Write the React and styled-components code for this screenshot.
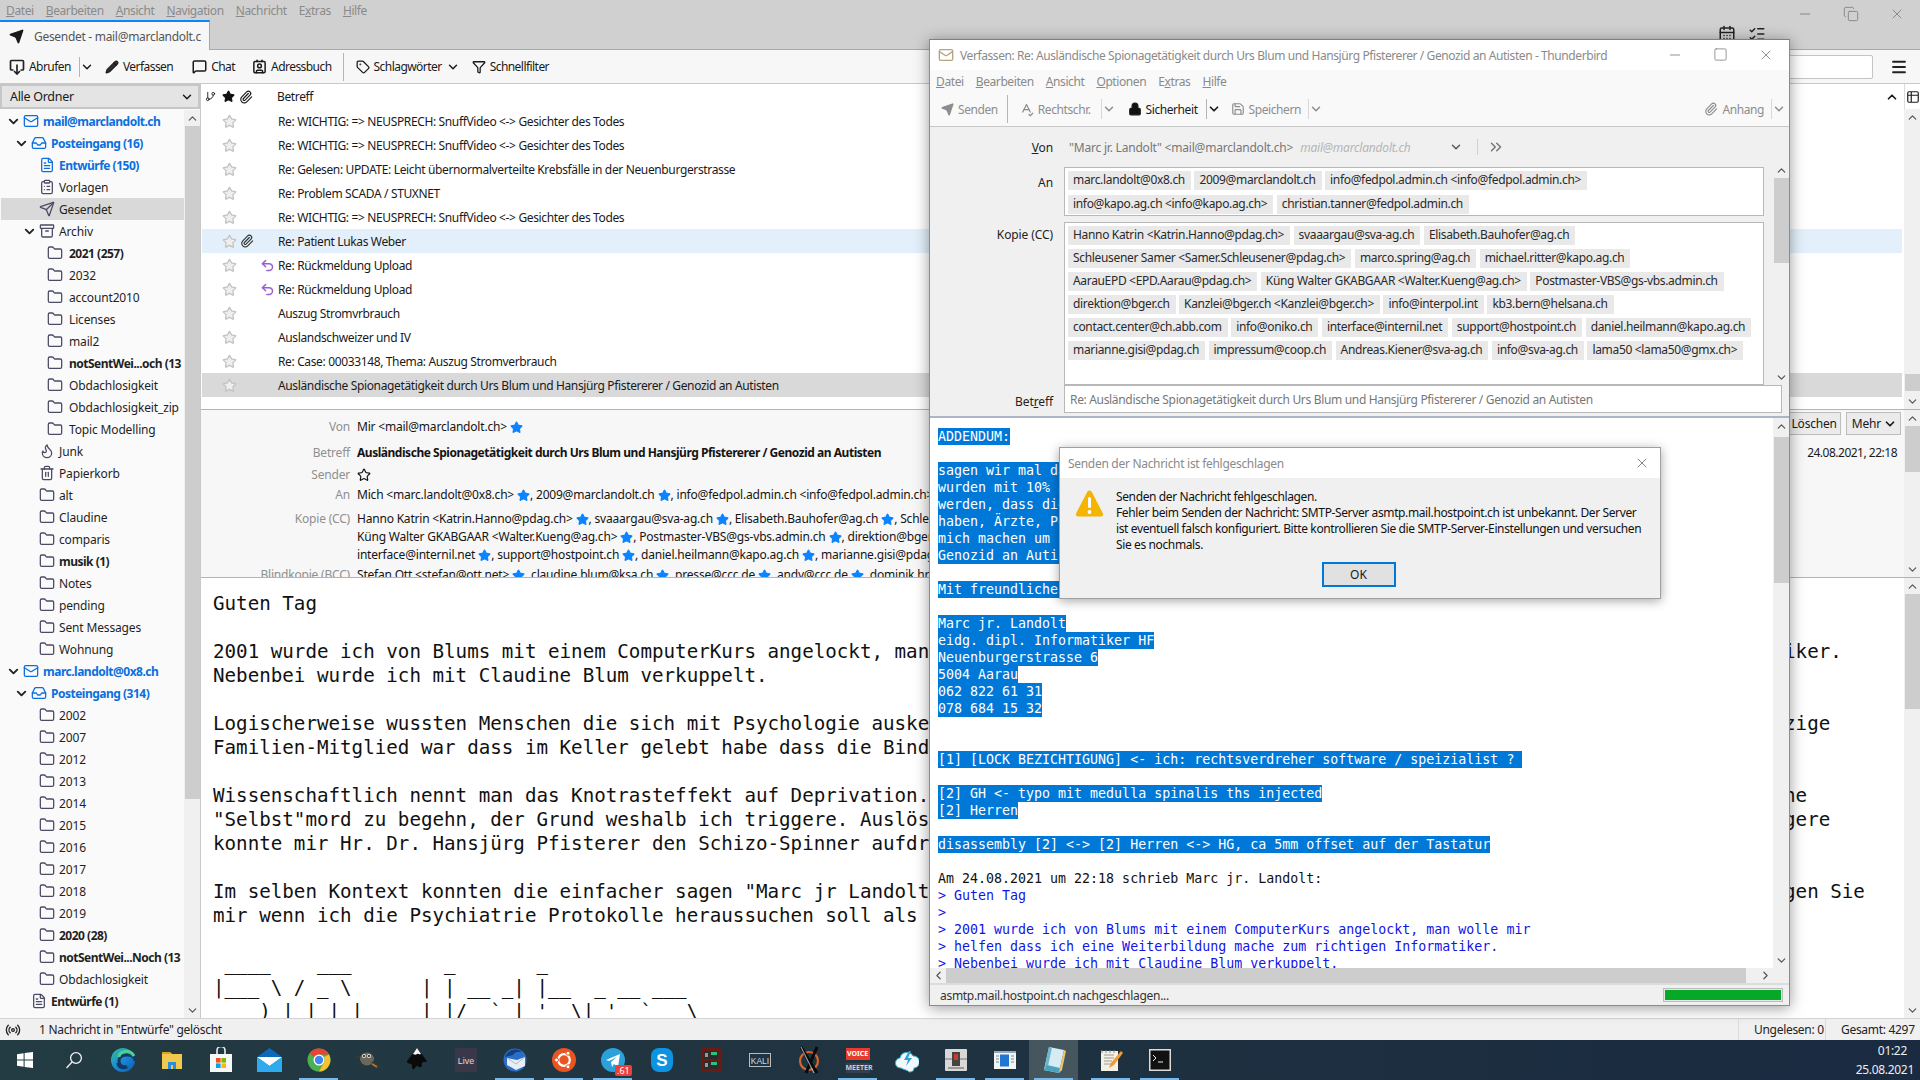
import React from 'react'
import styled, { createGlobalStyle } from 'styled-components'
import {
  Star, Paperclip, ChevronDown, ChevronUp, ChevronRight, ChevronLeft, Pencil, MessageSquare, Tag, Filter, Send,
  Flame, Trash2, Folder, Lock, Save, X, Minus, Square, Copy, Menu, ChevronsRight, Inbox, FileText,
  ClipboardList, Archive, Mail, Contact, CalendarDays, ListChecks, Radio, Undo2, SpellCheck, GitBranch, Table2,
} from 'lucide-react'

const UI = '"Noto Sans", "Open Sans", sans-serif'
const MONO = '"DejaVu Sans Mono", "Liberation Mono", monospace'

const GlobalStyle = createGlobalStyle`
  html, body { margin: 0; padding: 0; background: #fff; }
  body { font-family: ${UI}; font-size: 12px; color: #1a1a1a; }
  * { box-sizing: border-box; }
`

const Desktop = styled.div`
  position: relative;
  width: 1920px;
  height: 1080px;
  overflow: hidden;
  display: flex;
  flex-direction: column;
  background: #fff;
`

const MenuRow = styled.div`
  display: flex;
  align-items: center;
  gap: 12px;
  flex: none;
  height: ${p => p.$h}px;
  padding-left: ${p => p.$pad}px;
  background: ${p => p.$bg};
  color: #8a8a8a;
  font-size: 12px;
  letter-spacing: -0.4px;
  u { text-underline-offset: 1px; }
`

const TitleArea = styled.div`
  display: flex;
  flex: none;
  height: 30px;
  background: #d0d0d0;
  border-bottom: 1px solid #a8a8a8;
`

const Tab = styled.div`
  width: 210px;
  height: 30px;
  display: flex;
  align-items: center;
  gap: 10px;
  padding-left: 9px;
  background: #f7f7f7;
  border-top: 2px solid #0a84ff;
  border-right: 1px solid #a8a8a8;
  color: #555;
  letter-spacing: -0.3px;
  white-space: nowrap;
  overflow: hidden;
`

const WinControls = styled.div`
  position: absolute;
  top: ${p => p.$top}px;
  right: ${p => p.$right}px;
  display: flex;
  gap: 30px;
  color: #777;
`

const TitleTools = styled.div`
  position: absolute;
  top: 25px;
  left: 1718px;
  display: flex;
  gap: 12px;
  color: #222;
`

const ToolItem = styled.div`
  display: flex;
  align-items: center;
  gap: 4px;
  margin-left: ${p => p.$ml || 0}px;
  font-size: 12px;
  letter-spacing: -0.42px;
  color: ${p => (p.$dim ? '#8d8d8d' : '#1a1a1a')};
  white-space: nowrap;
`

const MainToolbar = styled.div`
  display: flex;
  align-items: center;
  flex: none;
  height: 34px;
  padding-left: 9px;
  background: #f7f7f7;
  border-bottom: 1px solid #c8c8c8;
  position: relative;
  ${ToolItem} { letter-spacing: -0.55px; }
`

const ToolSep = styled.div`
  width: 1px;
  height: ${p => p.$h || 20}px;
  margin-left: ${p => p.$ml || 0}px;
  background: ${p => p.$c || '#b5b5b5'};
`

const SearchBox = styled.div`
  position: absolute;
  right: 47px;
  top: 5px;
  width: 160px;
  height: 24px;
  background: #fff;
  border: 1px solid #c4c4c4;
  border-radius: 2px;
`

const HamburgerSlot = styled.div`
  position: absolute;
  right: 12px;
  top: 8px;
  color: #222;
`

const Panes = styled.div`
  display: flex;
  flex: 1;
  min-height: 0;
`

const FolderPane = styled.div`
  flex: none;
  width: 201px;
  display: flex;
  flex-direction: column;
  background: #fafafa;
  border-right: 1px solid #c8c8c8;
`

const FolderSelect = styled.div`
  flex: none;
  height: 25px;
  margin-bottom: 1px;
  width: 200px;
  display: flex;
  align-items: center;
  justify-content: space-between;
  padding: 0 4px 0 8px;
  background: #e4e4e4;
  border: 2px solid #c6c6c6;
  font-size: 12.5px;
  letter-spacing: -0.3px;
`

const FolderBody = styled.div`
  flex: 1;
  min-height: 0;
  display: flex;
`

const FolderList = styled.div`
  flex: none;
  width: 184px;
  overflow: hidden;
`

const FolderRow = styled.div`
  display: flex;
  align-items: center;
  height: 22px;
  padding-left: ${p => 4 + p.$level * 8}px;
  margin-left: 1px;
  background: ${p => (p.$sel ? '#d9d9d9' : 'transparent')};
  color: ${p => (p.$blue ? '#0a6fe0' : '#1f1f1f')};
  font-weight: ${p => (p.$bold ? 700 : 400)};
  font-size: 12px;
  letter-spacing: ${p => (p.$bold ? -0.5 : -0.15)}px;
  white-space: nowrap;
  overflow: hidden;
`

const Twisty = styled.span`
  flex: none;
  width: 17px;
  display: flex;
  align-items: center;
  justify-content: center;
  color: #222;
`

const FolderIcon = styled.span`
  flex: none;
  width: 17px;
  margin-left: ${p => (p.$noTwisty ? 17 : 0)}px;
  margin-right: ${p => p.$mr ?? 5}px;
  display: flex;
  align-items: center;
  justify-content: center;
  color: ${p => (p.$blue ? '#0a6fe0' : '#4b4b66')};
`

const Scroll = styled.div`
  flex: ${p => (p.$fill ? 1 : 'none')};
  min-height: 0;
  display: flex;
  flex-direction: ${p => (p.$horizontal ? 'row' : 'column')};
  align-items: center;
  width: ${p => (p.$horizontal ? 'auto' : '16px')};
  height: ${p => (p.$horizontal ? '15px' : 'auto')};
  padding-right: ${p => (p.$horizontal ? '16px' : 0)};
  background: #f0f0f0;
  color: #555;
`

const Thumb = styled.div`
  flex: none;
  background: #cdcdcd;
  width: ${p => (p.$horizontal ? `${p.$size}px` : '15px')};
  height: ${p => (p.$horizontal ? '15px' : `${p.$size}px`)};
  margin-top: ${p => (p.$horizontal ? 0 : p.$offset)}px;
  margin-left: ${p => (p.$horizontal ? p.$offset : 0)}px;
`

const ArrowSlot = styled.div`
  flex: none;
  display: flex;
  align-items: center;
  justify-content: center;
  width: ${p => (p.$horizontal ? 16 : 15)}px;
  height: ${p => (p.$horizontal ? 15 : 16)}px;
  margin-top: ${p => (p.$end && !p.$horizontal ? 'auto' : 0)};
  margin-left: ${p => (p.$end && p.$horizontal ? 'auto' : 0)};
`

const Right = styled.div`
  flex: 1;
  min-width: 0;
  display: flex;
  flex-direction: column;
`

const ThreadPane = styled.div`
  flex: none;
  height: 325px;
  display: flex;
`

const ThreadList = styled.div`
  flex: 1;
  min-width: 0;
`

const ThreadScrollCol = styled.div`
  flex: none;
  width: 16px;
  display: flex;
  flex-direction: column;
`

const ColumnPicker = styled.div`
  flex: none;
  height: 25px;
  display: flex;
  align-items: center;
  justify-content: center;
  border-left: 1px solid #dcdcdc;
`

const ThreadHeader = styled.div`
  display: grid;
  grid-template-columns: 18px 18px 18px 22px 1fr 24px;
  align-items: center;
  height: 25px;
  font-size: 12px;
`

const IconCell = styled.span`
  display: flex;
  justify-content: center;
  color: ${p => p.$c || '#1a1a1a'};
`

const Subject = styled.span`
  white-space: nowrap;
  letter-spacing: -0.36px;
  color: #1a1a1a;
`

const ThreadRow = styled.div`
  display: grid;
  grid-template-columns: 18px 18px 18px 22px 1fr;
  align-items: center;
  height: 24px;
  margin: 0 2px 0 1px;
  background: ${p => p.$bg || 'transparent'};
  font-size: 12px;
`

const MsgHeader = styled.div`
  flex: none;
  height: 169px;
  display: flex;
  background: #f7f7f7;
  border-top: 1px solid #aab6c6;
  border-bottom: 1px solid #aab6c6;
  overflow: hidden;
`

const HeaderFields = styled.div`
  flex: 1;
  min-width: 0;
  padding-top: 8px;
  overflow: hidden;
`

const FieldRow = styled.div`
  display: grid;
  grid-template-columns: 149px 1fr;
  column-gap: 7px;
  height: 18px;
  line-height: 18px;
  margin-top: ${p => p.$mt || 0}px;
  font-size: 12px;
  white-space: nowrap;
  letter-spacing: -0.2px;
`

const FieldLabel = styled.span`
  text-align: right;
  color: #8f8f8f;
`

const FieldValue = styled.span`
  display: flex;
  align-items: center;
  font-weight: ${p => (p.$bold ? 700 : 400)};
  letter-spacing: ${p => (p.$bold ? -0.47 : -0.2)}px;
  color: #141414;
  white-space: pre;
`

const HeaderAside = styled.div`
  flex: none;
  width: 150px;
  padding: 2px 3px 0 0;
`

const HeaderActions = styled.div`
  display: flex;
  justify-content: flex-end;
  gap: 5px;
`

const HeaderBtn = styled.div`
  height: 23px;
  display: flex;
  align-items: center;
  gap: 2px;
  padding: 0 3px 0 5px;
  background: #ebebeb;
  border: 1px solid #bdbdbd;
  font-size: 12px;
  letter-spacing: -0.2px;
  color: #1a1a1a;
`

const MsgDate = styled.div`
  margin-top: 9px;
  padding-right: 4px;
  text-align: right;
  font-size: 12px;
  letter-spacing: -0.5px;
`

const MsgBodyRow = styled.div`
  flex: 1;
  min-height: 0;
  display: flex;
`

const MsgBody = styled.pre`
  flex: 1;
  min-width: 0;
  margin: 0;
  padding: 14px 0 0 12px;
  overflow: hidden;
  font-family: ${MONO};
  font-size: 19.2px;
  line-height: 24px;
  color: #111;
`

const StatusBar = styled.div`
  flex: none;
  height: 22px;
  display: flex;
  align-items: center;
  padding-left: 5px;
  background: #f0f0f0;
  border-top: 1px solid #d4d4d4;
  font-size: 12px;
  letter-spacing: -0.3px;
  color: #222;
`

const StatusCell = styled.div`
  height: 100%;
  display: flex;
  align-items: center;
  margin-left: ${p => (p.$auto ? 'auto' : 0)};
  width: ${p => p.$w}px;
  padding-left: ${p => p.$pad || 0}px;
  border-left: ${p => (p.$line ? '1px solid #dcdcdc' : 'none')};
  white-space: nowrap;
`

const Taskbar = styled.div`
  flex: none;
  height: 40px;
  display: flex;
  background: linear-gradient(90deg, #233b43, #1f3340 45%, #1a2a41);
  color: #eee;
`

const TaskCell = styled.div`
  position: relative;
  flex: none;
  width: 49px;
  height: 40px;
  display: flex;
  align-items: center;
  justify-content: center;
  margin-left: ${p => p.$ml || 0}px;
  background: ${p => (p.$active ? '#46565f' : 'transparent')};
  &::after {
    content: '';
    display: ${p => (p.$on ? 'block' : 'none')};
    position: absolute;
    left: 5px;
    right: 5px;
    bottom: 0;
    height: 2px;
    background: #76b9ed;
  }
`

const Badge = styled.span`
  position: absolute;
  left: 27px;
  top: 25px;
  padding: 0 2px;
  background: #e8413c;
  color: #fff;
  font-size: 9px;
  line-height: 11px;
  border-radius: 2px;
`

const Clock = styled.div`
  margin-left: auto;
  width: 70px;
  padding-right: 6px;
  display: flex;
  flex-direction: column;
  align-items: flex-end;
  justify-content: center;
  gap: 4px;
  font-size: 12px;
  letter-spacing: -0.3px;
  line-height: 15px;
`

const ClockTime = styled.span`
  padding-right: 7px;
`

const VoiceLogo = styled.div`
  display: flex;
  flex-direction: column;
  align-items: center;
  width: 24px;
  font-size: 7px;
  font-weight: 700;
  line-height: 10px;
`

const VoiceTop = styled.span`
  width: 100%;
  text-align: center;
  background: #e83b30;
  color: #fff;
  line-height: 12px;
`

const VoiceBottom = styled.span`
  margin-top: 3px;
  width: 100%;
  text-align: center;
  background: #35404c;
  color: #ccd;
`

/* compose window */

const ComposeWindow = styled.div`
  position: absolute;
  left: 929px;
  top: 39px;
  width: 861px;
  height: 967px;
  display: flex;
  flex-direction: column;
  background: #f0f0f0;
  border: 1px solid #8c8c8c;
  border-top-color: #7f7f7f;
  box-shadow: 0 2px 14px rgba(0, 0, 0, 0.4);
`

const ComposeTitle = styled.div`
  flex: none;
  height: 30px;
  display: flex;
  align-items: center;
  gap: 6px;
  padding-left: 8px;
  background: #fff;
  color: #8a8a8a;
  font-size: 12px;
  letter-spacing: -0.41px;
  white-space: nowrap;
`

const ComposeToolbar = styled.div`
  position: relative;
  flex: none;
  height: 35px;
  display: flex;
  align-items: center;
  padding-left: 11px;
  background: #f9f9f9;
  border-bottom: 1px solid #c8c8c8;
`

const ToolRight = styled.div`
  margin-left: auto;
  padding-right: 3px;
  display: flex;
  align-items: center;
`

const ComposeHead = styled.div`
  flex: none;
  height: 291px;
  display: flex;
  background: #f0f0f0;
  border-bottom: 2px solid #aab6c6;
`

const HeadFields = styled.div`
  flex: 1;
  min-width: 0;
`

const HeadScroll = styled.div`
  flex: none;
  display: flex;
  margin: 35px 0 31px;
`

const HeadGrid = styled.div`
  display: grid;
  grid-template-columns: 123px 1fr;
  column-gap: 11px;
`

const HeadLabel = styled.div`
  text-align: right;
  padding-top: ${p => p.$top || 0}px;
  font-size: 12px;
  letter-spacing: -0.1px;
  color: #222;
`

const VonLine = styled.div`
  height: 40px;
  display: flex;
  align-items: center;
  padding-left: 5px;
  color: #777;
  white-space: nowrap;
  letter-spacing: -0.2px;
`

const VonAlias = styled.i`
  margin-left: 7px;
  color: #b5b5b5;
`

const VonChevron = styled.span`
  display: flex;
  margin-left: 39px;
  color: #555;
`

const VonSep = styled.span`
  width: 1px;
  height: 16px;
  margin: 0 9px 0 14px;
  background: #d0d0d0;
`

const PillBox = styled.div`
  margin-right: 9px;
  height: ${p => p.$h}px;
  margin-bottom: ${p => p.$mb || 0}px;
  padding: 3px 0 0 3px;
  display: flex;
  flex-wrap: wrap;
  align-content: flex-start;
  column-gap: 3.5px;
  row-gap: ${p => p.$gap}px;
  background: #fff;
  border: 1px solid #b8b8b8;
`

const Pill = styled.span`
  height: 19px;
  line-height: 18px;
  padding: 0 6px 0 5px;
  background: #e9e9e9;
  color: #2a2a2a;
  font-size: 12px;
  letter-spacing: -0.33px;
  white-space: nowrap;
`

const SubjectInput = styled.div`
  height: 28px;
  margin-right: -9px;
  position: relative;
  padding-left: 5px;
  display: flex;
  align-items: center;
  background: #fff;
  border: 1px solid #b8b8b8;
  color: #777;
  font-size: 12px;
  letter-spacing: -0.33px;
  white-space: nowrap;
`

const ComposeBodyRow = styled.div`
  flex: 1;
  min-height: 0;
  display: flex;
  background: #fff;
`

const ComposeText = styled.pre`
  flex: 1;
  min-width: 0;
  margin: 0;
  padding: 10px 0 0 8px;
  overflow: hidden;
  font-family: ${MONO};
  font-size: 13.3px;
  line-height: 17px;
  color: #111;
`

const TextLine = styled.div`
  height: 17px;
  color: ${p => (p.$quote ? '#1414e6' : 'inherit')};
`

const Sel = styled.span`
  display: inline-block;
  height: 17px;
  background: #0078d7;
  color: #fff;
`

const ComposeStatus = styled.div`
  flex: none;
  height: 22px;
  display: flex;
  align-items: center;
  justify-content: space-between;
  padding: 0 6px 0 10px;
  background: #f0f0f0;
  border-top: 2px solid #dcdcdc;
  font-size: 12px;
  letter-spacing: -0.3px;
  color: #333;
`

const ProgressTrack = styled.div`
  width: 120px;
  height: 14px;
  padding: 1px;
  background: #e6e6e6;
  border: 1px solid #bcbcbc;
`

const ProgressFill = styled.div`
  height: 100%;
  background: #06a927;
`

/* error dialog */

const Dialog = styled.div`
  position: absolute;
  left: 1059px;
  top: 447px;
  width: 602px;
  height: 152px;
  background: #f0f0f0;
  border: 1px solid #a0a0a0;
  box-shadow: 0 2px 10px rgba(0, 0, 0, 0.35);
`

const DialogTitle = styled.div`
  height: 30px;
  display: flex;
  align-items: center;
  justify-content: space-between;
  padding: 0 10px 0 8px;
  background: #fff;
  color: #8a8a8a;
  font-size: 12px;
  letter-spacing: -0.3px;
`

const DialogBody = styled.div`
  display: flex;
  gap: 12px;
  padding: 11px 0 0 15px;
`

const DialogText = styled.div`
  white-space: nowrap;
  font-size: 12px;
  line-height: 16px;
  letter-spacing: -0.38px;
  color: #111;
`

const OkRow = styled.div`
  display: flex;
  justify-content: center;
  margin: 9px 3px 0 0;
`

const OkButton = styled.div`
  width: 74px;
  height: 25px;
  display: flex;
  align-items: center;
  justify-content: center;
  background: #e1e1e1;
  border: 2px solid #0078d7;
  font-size: 12px;
`

const folderRows = [
  { l: 0, t: 'mail@marclandolt.ch', i: 'account', twist: 1, blue: 1, bold: 1 },
  { l: 1, t: 'Posteingang (16)', i: 'inbox', twist: 1, blue: 1, bold: 1 },
  { l: 2, t: 'Entwürfe (150)', i: 'draft', blue: 1, bold: 1 },
  { l: 2, t: 'Vorlagen', i: 'template' },
  { l: 2, t: 'Gesendet', i: 'sent', sel: 1 },
  { l: 2, t: 'Archiv', i: 'archive', twist: 1 },
  { l: 3, t: '2021 (257)', bold: 1 },
  { l: 3, t: '2032' },
  { l: 3, t: 'account2010' },
  { l: 3, t: 'Licenses' },
  { l: 3, t: 'mail2' },
  { l: 3, t: 'notSentWei...och (13', bold: 1 },
  { l: 3, t: 'Obdachlosigkeit' },
  { l: 3, t: 'Obdachlosigkeit_zip' },
  { l: 3, t: 'Topic Modelling' },
  { l: 2, t: 'Junk', i: 'junk' },
  { l: 2, t: 'Papierkorb', i: 'trash' },
  { l: 2, t: 'alt' },
  { l: 2, t: 'Claudine' },
  { l: 2, t: 'comparis' },
  { l: 2, t: 'musik (1)', bold: 1 },
  { l: 2, t: 'Notes' },
  { l: 2, t: 'pending' },
  { l: 2, t: 'Sent Messages' },
  { l: 2, t: 'Wohnung' },
  { l: 0, t: 'marc.landolt@0x8.ch', i: 'account', twist: 1, blue: 1, bold: 1 },
  { l: 1, t: 'Posteingang (314)', i: 'inbox', twist: 1, blue: 1, bold: 1 },
  ...['2002', '2007', '2012', '2013', '2014', '2015', '2016', '2017', '2018', '2019'].map(t => ({ l: 2, t })),
  { l: 2, t: '2020 (28)', bold: 1 },
  { l: 2, t: 'notSentWei...Noch (13', bold: 1 },
  { l: 2, t: 'Obdachlosigkeit' },
  { l: 1, t: 'Entwürfe (1)', i: 'draft', bold: 1 },
]

const folderIcons = {
  account: Mail, inbox: Inbox, draft: FileText, template: ClipboardList, sent: Send, archive: Archive, junk: Flame, trash: Trash2,
}

const threads = [
  { s: 'Re: WICHTIG: => NEUSPRECH: SnuffVideo <-> Gesichter des Todes' },
  { s: 'Re: WICHTIG: => NEUSPRECH: SnuffVideo <-> Gesichter des Todes' },
  { s: 'Re: Gelesen: UPDATE: Leicht übernormalverteilte Krebsfälle in der Neuenburgerstrasse' },
  { s: 'Re: Problem SCADA / STUXNET' },
  { s: 'Re: WICHTIG: => NEUSPRECH: SnuffVideo <-> Gesichter des Todes' },
  { s: 'Re: Patient Lukas Weber', clip: 1, bg: '#e3f0fb' },
  { s: 'Re: Rückmeldung Upload', reply: 1 },
  { s: 'Re: Rückmeldung Upload', reply: 1 },
  { s: 'Auszug Stromvrbrauch' },
  { s: 'Auslandschweizer und IV' },
  { s: 'Re: Case: 00033148, Thema: Auszug Stromverbrauch' },
  { s: 'Ausländische Spionagetätigkeit durch Urs Blum und Hansjürg Pfistererer / Genozid an Autisten', bg: '#d9d9d9' },
]

const anLine = ['Mich <marc.landolt@0x8.ch> ', '2009@marclandolt.ch', 'info@fedpol.admin.ch <info@fedpol.admin.ch> ', 'info@kapo.ag.ch <info@kapo.ag.ch> ', 'christian.tanner@fedpol.admin.ch']
const ccLines = [
  ['Hanno Katrin <Katrin.Hanno@pdag.ch> ', 'svaaargau@sva-ag.ch', 'Elisabeth.Bauhofer@ag.ch', 'Schleusener Samer <Samer.Schleusener@pdag.ch> ', 'marco.spring@ag.ch', 'michael.ritter@kapo.ag.ch', 'AarauEPD <EPD.Aarau@pdag.ch> '],
  ['Küng Walter GKABGAAR <Walter.Kueng@ag.ch> ', 'Postmaster-VBS@gs-vbs.admin.ch', 'direktion@bger.ch', 'Kanzlei@bger.ch <Kanzlei@bger.ch> ', 'info@interpol.int', 'kb3.bern@helsana.ch', 'contact.center@ch.abb.com', 'info@oniko.ch'],
  ['interface@internil.net', 'support@hostpoint.ch', 'daniel.heilmann@kapo.ag.ch', 'marianne.gisi@pdag.ch', 'impressum@coop.ch', 'Andreas.Kiener@sva-ag.ch', 'info@sva-ag.ch', 'lama50 <lama50@gmx.ch> '],
]
const bccLine = ['Stefan Ott <stefan@ott.net> ', 'claudine.blum@ksa.ch', 'presse@ccc.de', 'andy@ccc.de', 'dominik.hrzan@ccc.de']

const toPills = [
  'marc.landolt@0x8.ch', '2009@marclandolt.ch', 'info@fedpol.admin.ch <info@fedpol.admin.ch>',
  'info@kapo.ag.ch <info@kapo.ag.ch>', 'christian.tanner@fedpol.admin.ch',
]
const ccPills = [
  'Hanno Katrin <Katrin.Hanno@pdag.ch>', 'svaaargau@sva-ag.ch', 'Elisabeth.Bauhofer@ag.ch',
  'Schleusener Samer <Samer.Schleusener@pdag.ch>', 'marco.spring@ag.ch', 'michael.ritter@kapo.ag.ch',
  'AarauEPD <EPD.Aarau@pdag.ch>', 'Küng Walter GKABGAAR <Walter.Kueng@ag.ch>', 'Postmaster-VBS@gs-vbs.admin.ch',
  'direktion@bger.ch', 'Kanzlei@bger.ch <Kanzlei@bger.ch>', 'info@interpol.int', 'kb3.bern@helsana.ch',
  'contact.center@ch.abb.com', 'info@oniko.ch', 'interface@internil.net', 'support@hostpoint.ch', 'daniel.heilmann@kapo.ag.ch',
  'marianne.gisi@pdag.ch', 'impressum@coop.ch', 'Andreas.Kiener@sva-ag.ch', 'info@sva-ag.ch', 'lama50 <lama50@gmx.ch>',
]

// the middle of these lines sits under the compose window, only head and tail show
const wide = (head, tail, total) => head.padEnd(total - tail.length) + tail

const bodyText = [
  'Guten Tag',
  '',
  wide('2001 wurde ich von Blums mit einem ComputerKurs angelockt, man wolle mir', 'helfen dass ich eine Weiterbildung mache zum richtigen Informatiker.', 141),
  'Nebenbei wurde ich mit Claudine Blum verkuppelt.',
  '',
  wide('Logischerweise wussten Menschen die sich mit Psychologie auske', 'zige', 140),
  'Familien-Mitglied war dass im Keller gelebt habe dass die Bind',
  '',
  wide('Wissenschaftlich nennt man das Knotrasteffekt auf Deprivation.', 'ne', 138),
  wide('"Selbst"mord zu begehn, der Grund weshalb ich triggere. Auslös', 'gere', 140),
  'konnte mir Hr. Dr. Hansjürg Pfisterer den Schizo-Spinner aufdr',
  '',
  wide('Im selben Kontext konnten die einfacher sagen "Marc jr Landolt', 'gen Sie', 143),
  'mir wenn ich die Psychiatrie Protokolle heraussuchen soll als',
  '',
  ' ____    ___        _       _',
  '|___ \\ / _ \\      | | __ _| |__  _ __ ___',
  '    ) | | | |     | |/ _` | \'_ \\| \'_ ` _ \\',
].join('\n')

const composeLines = [
  { s: 'ADDENDUM:' }, {},
  { s: 'sagen wir mal das die' },
  { s: 'wurden mit 10% aller' },
  { s: 'werden, dass die' },
  { s: 'haben, Ärzte, Polizei' },
  { s: 'mich machen um ihren' },
  { s: 'Genozid an Autisten' }, {},
  { s: 'Mit freundlichen Grüssen' }, {},
  { s: 'Marc jr. Landolt' },
  { s: 'eidg. dipl. Informatiker HF' },
  { s: 'Neuenburgerstrasse 6' },
  { s: '5004 Aarau' },
  { s: '062 822 61 31' },
  { s: '078 684 15 32' }, {}, {},
  { s: '[1] [LOCK BEZICHTIGUNG] <- ich: rechtsverdreher software / speizialist ? ' }, {},
  { s: '[2] GH <- typo mit medulla spinalis ths injected' },
  { s: '[2] Herren' }, {},
  { s: 'disassembly [2] <-> [2] Herren <-> HG, ca 5mm offset auf der Tastatur' }, {},
  { t: 'Am 24.08.2021 um 22:18 schrieb Marc jr. Landolt:' },
  { q: '> Guten Tag' },
  { q: '>' },
  { q: '> 2001 wurde ich von Blums mit einem ComputerKurs angelockt, man wolle mir' },
  { q: '> helfen dass ich eine Weiterbildung mache zum richtigen Informatiker.' },
  { q: '> Nebenbei wurde ich mit Claudine Blum verkuppelt.' },
]

function Scrollbar({ offset, size, horizontal, fill }) {
  const Start = horizontal ? ChevronLeft : ChevronUp
  const End = horizontal ? ChevronRight : ChevronDown
  return (
    <Scroll $horizontal={horizontal} $fill={fill}>
      <ArrowSlot $horizontal={horizontal}><Start size={13} strokeWidth={2.2} /></ArrowSlot>
      <Thumb $horizontal={horizontal} $offset={offset} $size={size} />
      <ArrowSlot $horizontal={horizontal} $end><End size={13} strokeWidth={2.2} /></ArrowSlot>
    </Scroll>
  )
}

function Mails({ list }) {
  return list.map((m, i) => (
    <React.Fragment key={m}>
      {m.trimEnd()}
      <Star size={13} fill="#0a84ff" color="#0a84ff" style={{ margin: '0 0 0 3px' }} />
      {i < list.length - 1 ? ', ' : ''}
    </React.Fragment>
  ))
}

function Mnemonic({ word, at = 0 }) {
  return <span>{word.slice(0, at)}<u>{word[at]}</u>{word.slice(at + 1)}</span>
}

// Abrufen: tray with an arrow going down
function GetMailIcon() {
  return (
    <svg width="16" height="16" viewBox="0 0 16 16" fill="none" stroke="#222" strokeWidth="1.7">
      <path d="M4.500 11H2.500a1 1 0 0 1-1-1V2.500a1 1 0 0 1 1-1h11a1 1 0 0 1 1 1V10a1 1 0 0 1-1 1h-2" />
      <path d="M8 5.500V15M5 12l3 3 3-3" />
    </svg>
  )
}

const taskIcons = [
  <svg width="18" height="18" viewBox="0 0 18 18" fill="#fff"><path d="M1 3.200 7.600 2.200V8.400H1zM8.600 2.100 17 1V8.400H8.600zM1 9.400H7.600V15.800L1 14.800zM8.600 9.400H17V17L8.600 15.900z" /></svg>,
  <svg width="20" height="20" viewBox="0 0 20 20" fill="none" stroke="#f4f4f4" strokeWidth="1.300"><circle cx="12" cy="8" r="5.400" /><path d="M8 12 2.500 18" /></svg>,
  <svg width="26" height="26" viewBox="0 0 26 26"><defs><linearGradient id="ed" x1="0" y1="0" x2="1" y2="1"><stop offset="0" stopColor="#35c1a0" /><stop offset=".55" stopColor="#1b84d6" /><stop offset="1" stopColor="#0d5aa8" /></linearGradient></defs><circle cx="13" cy="13" r="12" fill="url(#ed)" /><path d="M25 14c0-4-4-6-8-6s-8 2-8 6 4 6 8 6c-4 2-9 0-9-4" fill="none" stroke="#123a66" strokeWidth="3" /><path d="M24 9c-2-4-7-6-11-4-3 1-4 3-4 5" fill="none" stroke="#4ed18f" strokeWidth="3" /></svg>,
  <svg width="24" height="24" viewBox="0 0 24 24"><path d="M2 4h8l2 2h10v15H2z" fill="#f2c94c" /><path d="M2 4h8l2 2H2z" fill="#d9a321" /><path d="M8 21v-7h8v7h-3v-4h-2v4z" fill="#2a8fd8" /></svg>,
  <svg width="24" height="26" viewBox="0 0 24 26"><path d="M8 7V3.500a4 4 0 0 1 8 0V7" fill="none" stroke="#eee" strokeWidth="1.600" /><rect x="1" y="7" width="22" height="18" fill="#f7f7f7" /><rect x="7" y="11" width="4.600" height="4.600" fill="#f25022" /><rect x="12.400" y="11" width="4.600" height="4.600" fill="#7fba00" /><rect x="7" y="16.400" width="4.600" height="4.600" fill="#00a4ef" /><rect x="12.400" y="16.400" width="4.600" height="4.600" fill="#ffb900" /></svg>,
  <svg width="25" height="25" viewBox="0 0 25 25"><path d="M0 9 12.500 0 25 9v15H0z" fill="#0b6bb8" /><path d="M0 9h25L12.500 18z" fill="#fff" /><path d="M0 9l12.500 9L25 9v15H0z" fill="#2eaaee" /></svg>,
  <svg width="24" height="24" viewBox="0 0 24 24"><circle cx="12" cy="12" r="11.500" fill="#4caf50" /><path d="M12 .5A11.500 11.500 0 0 1 22 6.500H12a5.500 5.500 0 0 0-5 3L2.800 5A11.500 11.500 0 0 1 12 .5z" fill="#ea4335" /><path d="M22 6.500A11.500 11.500 0 0 1 12 23.500l4.700-8.500a5.500 5.500 0 0 0 .3-6z" fill="#fbc02d" /><circle cx="12" cy="12" r="5.500" fill="#fff" /><circle cx="12" cy="12" r="4.200" fill="#4285f4" /></svg>,
  <svg width="26" height="20" viewBox="0 0 26 20"><ellipse cx="12" cy="9" rx="7" ry="6.500" fill="#6b675a" /><circle cx="9" cy="6" r="2" fill="#ddd" /><circle cx="14" cy="6" r="2" fill="#ddd" /><circle cx="9" cy="6" r="1" fill="#111" /><circle cx="14" cy="6" r="1" fill="#111" /><path d="M5 8 1 6M17 12l7 5" stroke="#3d3a30" strokeWidth="1.800" /><path d="M17 14l5 3" stroke="#b77a32" strokeWidth="1.500" /></svg>,
  <svg width="24" height="26" viewBox="0 0 24 26"><path d="M12 1 22 14c-2 2-4 0-5 2-1 1 1 3-1 4s-2-1-4-1-2 4-4 3 0-4-2-5-4 0-4-3z" fill="#0a0a0a" /><path d="M12 1l4 6c-2 1-3-1-4 0s-2 1-4 0z" fill="#f4f4f4" /></svg>,
  <svg width="22" height="24" viewBox="0 0 22 24"><rect width="22" height="24" fill="#3a3748" /><text x="11" y="16" textAnchor="middle" fontSize="9" fontFamily="Liberation Sans" fill="#ddd">Live</text></svg>,
  <svg width="24" height="26" viewBox="0 0 24 26"><circle cx="12" cy="13" r="11.500" fill="#2a6fc4" /><path d="M2 10c3-7 11-10 17-5-5-1-8 1-9 3z" fill="#123f85" /><path d="M4 11l10 2 8-3v9l-9 4-9-5z" fill="#e8eef6" /><path d="M4 11l9 6 9-7" fill="none" stroke="#a9bbd3" /></svg>,
  <svg width="24" height="24" viewBox="0 0 24 24"><circle cx="12" cy="12" r="12" fill="#e95420" /><circle cx="12" cy="12" r="5.800" fill="none" stroke="#fff" strokeWidth="2.200" /><circle cx="4.500" cy="12" r="2" fill="#fff" stroke="#e95420" /><circle cx="16" cy="5.200" r="2" fill="#fff" stroke="#e95420" /><circle cx="16" cy="18.800" r="2" fill="#fff" stroke="#e95420" /></svg>,
  <svg width="24" height="24" viewBox="0 0 24 24"><circle cx="12" cy="12" r="12" fill="#2aa1da" /><path d="M5 12 19 6l-2 13-4-3-2 3-1-5 6-5-8 4z" fill="#fff" /></svg>,
  <svg width="22" height="26" viewBox="0 0 22 26"><rect x="0" y="1" width="22" height="24" rx="8" fill="#0d94e0" /><text x="11" y="19" textAnchor="middle" fontSize="17" fontWeight="700" fontFamily="Liberation Sans" fill="#fff">S</text></svg>,
  <svg width="20" height="24" viewBox="0 0 20 24"><rect width="20" height="24" rx="2" fill="#6b1a14" /><rect x="2.500" y="3" width="15" height="8" fill="#2c2c2c" /><rect x="2.500" y="13" width="15" height="8" fill="#2c2c2c" /><rect x="10" y="4" width="6" height="3" fill="#26c281" /><rect x="10" y="14" width="6" height="3" fill="#26c281" /><rect x="4" y="5" width="3" height="4" fill="#999" /><rect x="4" y="15" width="3" height="4" fill="#999" /></svg>,
  <svg width="22" height="14" viewBox="0 0 22 14"><rect x=".5" y=".5" width="21" height="13" fill="none" stroke="#b5bcc4" /><text x="11" y="10.500" textAnchor="middle" fontSize="8.500" fontFamily="Liberation Sans" fill="#d6dade">KALI</text></svg>,
  <svg width="24" height="28" viewBox="0 0 24 28"><circle cx="12" cy="15" r="9" fill="none" stroke="#d8662a" strokeWidth="2.200" /><path d="M4 1 20 27M20 1 9 27" stroke="#0a0a0a" strokeWidth="3" /><path d="M4 1 17 27" stroke="#ddd" strokeWidth=".8" /></svg>,
  <VoiceLogo><VoiceTop>VOICE</VoiceTop><VoiceBottom>MEETER</VoiceBottom></VoiceLogo>,
  <svg width="24" height="26" viewBox="0 0 24 26"><path d="M6 21a5 5 0 0 1-1-10 7 7 0 0 1 13-2 6 6 0 0 1 1 12c0 3-2 4-5 4-1-2-5-2-8-4z" fill="#f2f8fc" stroke="#34b2d6" /><path d="M14 4 9 13h4l-2 6 6-8h-4l3-7z" fill="#2aa4d8" /></svg>,
  <svg width="22" height="22" viewBox="0 0 22 22"><rect width="22" height="22" rx="1" fill="#d8d8d8" /><rect x="7" y="3" width="8" height="14" fill="#444" /><rect x="9" y="5" width="4" height="6" fill="#c93a30" /><path d="M0 10h7M15 10h7" stroke="#777" /><rect x="3" y="18" width="16" height="2" fill="#999" /></svg>,
  <svg width="22" height="18" viewBox="0 0 22 18"><rect width="22" height="18" fill="#f2f4f6" /><rect width="22" height="2" fill="#98a8b8" /><rect x="6" y="3.500" width="9" height="12" fill="#1e77d0" /><path d="M2 5h3M2 8h3M2 11h3M17 5h3M17 8h3M17 11h3" stroke="#7a8794" /></svg>,
  <svg width="24" height="28" viewBox="0 0 24 28"><path d="M7 1 22 4l-5 23L2 24z" fill="#d6ecf2" /><path d="M2 24 7 1l3 .6L5 25z" fill="#6ab8cf" /><path d="M2 24l15 3 1-5-13-3z" fill="#4aa3bc" /><path d="M22 4 17 27l3-3 4-19z" fill="#f2c26e" /></svg>,
  <svg width="24" height="24" viewBox="0 0 24 24"><rect x="2" y="3" width="17" height="20" fill="#f3f1e6" /><path d="M5 7h10M5 10h10M5 13h8M5 16h7" stroke="#9a9a8a" /><path d="M3 2v3M7 2v3M11 2v3M15 2v3" stroke="#888" /><path d="M22 3 12 15l-2 5 5-3L24 5z" fill="#f29a2e" /></svg>,
  <svg width="22" height="22" viewBox="0 0 22 22"><rect width="22" height="22" fill="#dcdcdc" /><rect x="1.500" y="1.500" width="19" height="19" fill="#111" /><path d="M4 6l3 3-3 3M9 13h5" stroke="#eee" fill="none" /></svg>,
]

const taskOn = [6, 10, 11, 12, 17, 19, 20, 21, 22, 23]

export default function App() {
  return (
    <>
      <GlobalStyle />
      <Desktop>
        <MenuRow $h={20} $pad={6} $bg="#d0d0d0">
          <Mnemonic word="Datei" /><Mnemonic word="Bearbeiten" /><Mnemonic word="Ansicht" /><Mnemonic word="Navigation" /><Mnemonic word="Nachricht" /><Mnemonic word="Extras" at={1} /><Mnemonic word="Hilfe" />
        </MenuRow>
        <TitleArea>
          <Tab><Send size={15} color="#1a1a1a" fill="#1a1a1a" /><span>Gesendet - mail@marclandolt.c</span></Tab>
        </TitleArea>
        <WinControls $top={6} $right={15}>
          <Minus size={16} strokeWidth={1.2} /><Copy size={16} strokeWidth={1.2} /><X size={16} strokeWidth={1.2} />
        </WinControls>
        <TitleTools><CalendarDays size={18} /><ListChecks size={18} /></TitleTools>
        <MainToolbar>
          <ToolItem><GetMailIcon /><span>Abrufen</span></ToolItem>
          <ToolSep $ml={8} />
          <ToolItem><ChevronDown size={14} strokeWidth={2.5} /></ToolItem>
          <ToolItem $ml={11}><Pencil size={14} fill="#333" /><span>Verfassen</span></ToolItem>
          <ToolItem $ml={19}><MessageSquare size={15} strokeWidth={2.4} /><span>Chat</span></ToolItem>
          <ToolItem $ml={17}><Contact size={15} strokeWidth={2.4} /><span>Adressbuch</span></ToolItem>
          <ToolSep $ml={11} $h={28} />
          <ToolItem $ml={12}><Tag size={14} strokeWidth={2.2} /><span>Schlagwörter</span><ChevronDown size={14} strokeWidth={2.5} /></ToolItem>
          <ToolItem $ml={12}><Filter size={14} strokeWidth={2.2} /><span>Schnellfilter</span></ToolItem>
          <SearchBox />
          <HamburgerSlot><Menu size={18} strokeWidth={2.4} /></HamburgerSlot>
        </MainToolbar>
        <Panes>
          <FolderPane>
            <FolderSelect><span>Alle Ordner</span><ChevronDown size={14} strokeWidth={2.5} /></FolderSelect>
            <FolderBody>
              <FolderList>
                {folderRows.map((f, i) => {
                  const Icon = folderIcons[f.i] || Folder
                  return (
                    <FolderRow key={i} $level={f.l} $sel={f.sel} $blue={f.blue} $bold={f.bold}>
                      {f.twist && <Twisty><ChevronDown size={15} strokeWidth={3} /></Twisty>}
                      <FolderIcon $noTwisty={!f.twist} $blue={f.blue} $mr={f.l === 3 ? 6 : 4}><Icon size={16} strokeWidth={1.9} /></FolderIcon>
                      {f.t}
                    </FolderRow>
                  )
                })}
              </FolderList>
              <Scrollbar offset={0} size={673} />
            </FolderBody>
          </FolderPane>
          <Right>
            <ThreadPane>
              <ThreadList>
                <ThreadHeader>
                  <IconCell><GitBranch size={11} /></IconCell>
                  <IconCell><Star size={13} fill="#111" color="#111" /></IconCell>
                  <IconCell><Paperclip size={14} /></IconCell>
                  <IconCell />
                  <Subject>Betreff</Subject>
                  <IconCell><ChevronUp size={14} strokeWidth={3} /></IconCell>
                </ThreadHeader>
                {threads.map((t, i) => (
                  <ThreadRow key={i} $bg={t.bg}>
                    <IconCell />
                    <IconCell $c="#c2c2c2"><Star size={15} fill="#eee" strokeWidth={2} /></IconCell>
                    <IconCell>{t.clip && <Paperclip size={14} color="#333" />}</IconCell>
                    <IconCell>{t.reply && <Undo2 size={15} color="#9a5fd0" strokeWidth={2.4} />}</IconCell>
                    <Subject>{t.s}</Subject>
                  </ThreadRow>
                ))}
              </ThreadList>
              <ThreadScrollCol>
                <ColumnPicker><Table2 size={14} /></ColumnPicker>
                <Scrollbar fill offset={249} size={17} />
              </ThreadScrollCol>
            </ThreadPane>
            <MsgHeader>
              <HeaderFields>
                <FieldRow><FieldLabel>Von</FieldLabel><FieldValue><Mails list={['Mir <mail@marclandolt.ch> ']} /></FieldValue></FieldRow>
                <FieldRow $mt={8}><FieldLabel>Betreff</FieldLabel><FieldValue $bold>Ausländische Spionagetätigkeit durch Urs Blum und Hansjürg Pfistererer / Genozid an Autisten</FieldValue></FieldRow>
                <FieldRow $mt={4}><FieldLabel>Sender</FieldLabel><FieldValue><Star size={14} color="#111" strokeWidth={2} /></FieldValue></FieldRow>
                <FieldRow $mt={2}><FieldLabel>An</FieldLabel><FieldValue><Mails list={anLine} /></FieldValue></FieldRow>
                <FieldRow $mt={6}><FieldLabel>Kopie (CC)</FieldLabel><FieldValue><Mails list={ccLines[0]} /></FieldValue></FieldRow>
                {ccLines.slice(1).map((line, i) => (
                  <FieldRow key={i}><span /><FieldValue><Mails list={line} /></FieldValue></FieldRow>
                ))}
                <FieldRow $mt={2}><FieldLabel>Blindkopie (BCC)</FieldLabel><FieldValue><Mails list={bccLine} /></FieldValue></FieldRow>
              </HeaderFields>
              <HeaderAside>
                <HeaderActions>
                  <HeaderBtn><Trash2 size={14} />Löschen</HeaderBtn>
                  <HeaderBtn>Mehr<ChevronDown size={14} strokeWidth={3} /></HeaderBtn>
                </HeaderActions>
                <MsgDate>24.08.2021, 22:18</MsgDate>
              </HeaderAside>
              <Scrollbar offset={0} size={46} />
            </MsgHeader>
            <MsgBodyRow>
              <MsgBody>{bodyText}</MsgBody>
              <Scrollbar offset={0} size={115} />
            </MsgBodyRow>
          </Right>
        </Panes>
        <StatusBar>
          <StatusCell $w={34}><Radio size={16} /></StatusCell>
          <StatusCell>1 Nachricht in "Entwürfe" gelöscht</StatusCell>
          <StatusCell $auto $line $w={87} $pad={15}>Ungelesen: 0</StatusCell>
          <StatusCell $line $w={95} $pad={15}>Gesamt: 4297</StatusCell>
        </StatusBar>
        <Taskbar>
          {taskIcons.map((icon, i) => (
            <TaskCell key={i} $on={taskOn.includes(i)} $active={i === 21} $ml={i === 22 ? 8 : 0}>
              {icon}
              {i === 12 && <Badge>.61</Badge>}
            </TaskCell>
          ))}
          <Clock><ClockTime>01:22</ClockTime><span>25.08.2021</span></Clock>
        </Taskbar>

        <ComposeWindow>
          <ComposeTitle>
            <Mail size={16} color="#b9a37e" />
            <span>Verfassen: Re: Ausländische Spionagetätigkeit durch Urs Blum und Hansjürg Pfistererer / Genozid an Autisten - Thunderbird</span>
          </ComposeTitle>
          <WinControls $top={7} $right={15}>
            <Minus size={16} strokeWidth={1.2} /><Square size={15} strokeWidth={1.2} /><X size={16} strokeWidth={1.2} />
          </WinControls>
          <MenuRow $h={22} $pad={6} $bg="#f9f9f9">
            <Mnemonic word="Datei" /><Mnemonic word="Bearbeiten" /><Mnemonic word="Ansicht" /><Mnemonic word="Optionen" /><Mnemonic word="Extras" at={1} /><Mnemonic word="Hilfe" />
          </MenuRow>
          <ComposeToolbar>
            <ToolItem $dim><Send size={13} fill="#8d8d8d" /><span>Senden</span></ToolItem>
            <ToolSep $ml={9} $h={28} />
            <ToolItem $dim $ml={11}><SpellCheck size={15} /><span>Rechtschr.</span></ToolItem>
            <ToolSep $ml={10} $c="#d8d8d8" />
            <ToolItem $dim><ChevronDown size={14} strokeWidth={2.5} /></ToolItem>
            <ToolItem $ml={12}><Lock size={14} fill="#111" /><span>Sicherheit</span></ToolItem>
            <ToolSep $ml={8} />
            <ToolItem><ChevronDown size={14} strokeWidth={3} /></ToolItem>
            <ToolItem $dim $ml={10}><Save size={14} /><span>Speichern</span></ToolItem>
            <ToolSep $ml={7} $c="#d8d8d8" />
            <ToolItem $dim><ChevronDown size={14} strokeWidth={2.5} /></ToolItem>
            <ToolRight>
              <ToolItem $dim><Paperclip size={14} /><span>Anhang</span></ToolItem>
              <ToolSep $ml={7} $c="#d8d8d8" />
              <ToolItem $dim><ChevronDown size={14} strokeWidth={2.5} /></ToolItem>
            </ToolRight>
          </ComposeToolbar>
          <ComposeHead>
            <HeadFields>
              <HeadGrid>
                <HeadLabel $top={12}><Mnemonic word="Von" /></HeadLabel>
                <VonLine>
                  "Marc jr. Landolt" &lt;mail@marclandolt.ch&gt;
                  <VonAlias>mail@marclandolt.ch</VonAlias>
                  <VonChevron><ChevronDown size={14} strokeWidth={2.5} /></VonChevron>
                  <VonSep />
                  <ChevronsRight size={18} color="#777" strokeWidth={2} />
                </VonLine>
                <HeadLabel $top={7}>An</HeadLabel>
                <PillBox $h={49} $gap={5} $mb={6}>
                  {toPills.map(p => <Pill key={p}>{p}</Pill>)}
                </PillBox>
                <HeadLabel $top={4}>Kopie (CC)</HeadLabel>
                <PillBox $h={163} $gap={4}>
                  {ccPills.map(p => <Pill key={p}>{p}</Pill>)}
                </PillBox>
                <HeadLabel $top={8}>Bet<u>r</u>eff</HeadLabel>
                <SubjectInput>Re: Ausländische Spionagetätigkeit durch Urs Blum und Hansjürg Pfistererer / Genozid an Autisten</SubjectInput>
              </HeadGrid>
            </HeadFields>
            <HeadScroll><Scrollbar offset={0} size={85} /></HeadScroll>
          </ComposeHead>
          <ComposeBodyRow>
            <ComposeText>
              {composeLines.map((l, i) => (
                <TextLine key={i} $quote={l.q}>
                  {l.s ? <Sel>{l.s}</Sel> : l.q || l.t || ''}
                </TextLine>
              ))}
            </ComposeText>
            <Scrollbar offset={3} size={146} />
          </ComposeBodyRow>
          <Scrollbar horizontal offset={0} size={800} />
          <ComposeStatus>
            <span>asmtp.mail.hostpoint.ch nachgeschlagen...</span>
            <ProgressTrack><ProgressFill /></ProgressTrack>
          </ComposeStatus>
        </ComposeWindow>

        <Dialog>
          <DialogTitle><span>Senden der Nachricht ist fehlgeschlagen</span><X size={16} strokeWidth={1.2} color="#666" /></DialogTitle>
          <DialogBody>
            <svg width="29" height="29" viewBox="0 0 29 29">
              <path d="M14.500 1.500c1.300 0 2 .8 2.600 1.900l10.800 21c.8 1.600 0 3.100-1.800 3.100H2.900c-1.800 0-2.600-1.500-1.800-3.100l10.800-21c.6-1.100 1.300-1.900 2.600-1.900z" fill="#f4b400" />
              <rect x="13" y="8" width="3" height="11" rx="1.500" fill="#fff" />
              <circle cx="14.500" cy="23" r="1.900" fill="#fff" />
            </svg>
            <DialogText>
              Senden der Nachricht fehlgeschlagen.<br />
              Fehler beim Senden der Nachricht: SMTP-Server asmtp.mail.hostpoint.ch ist unbekannt. Der Server<br />
              ist eventuell falsch konfiguriert. Bitte kontrollieren Sie die SMTP-Server-Einstellungen und versuchen<br />
              Sie es nochmals.
            </DialogText>
          </DialogBody>
          <OkRow><OkButton>OK</OkButton></OkRow>
        </Dialog>
      </Desktop>
    </>
  )
}
